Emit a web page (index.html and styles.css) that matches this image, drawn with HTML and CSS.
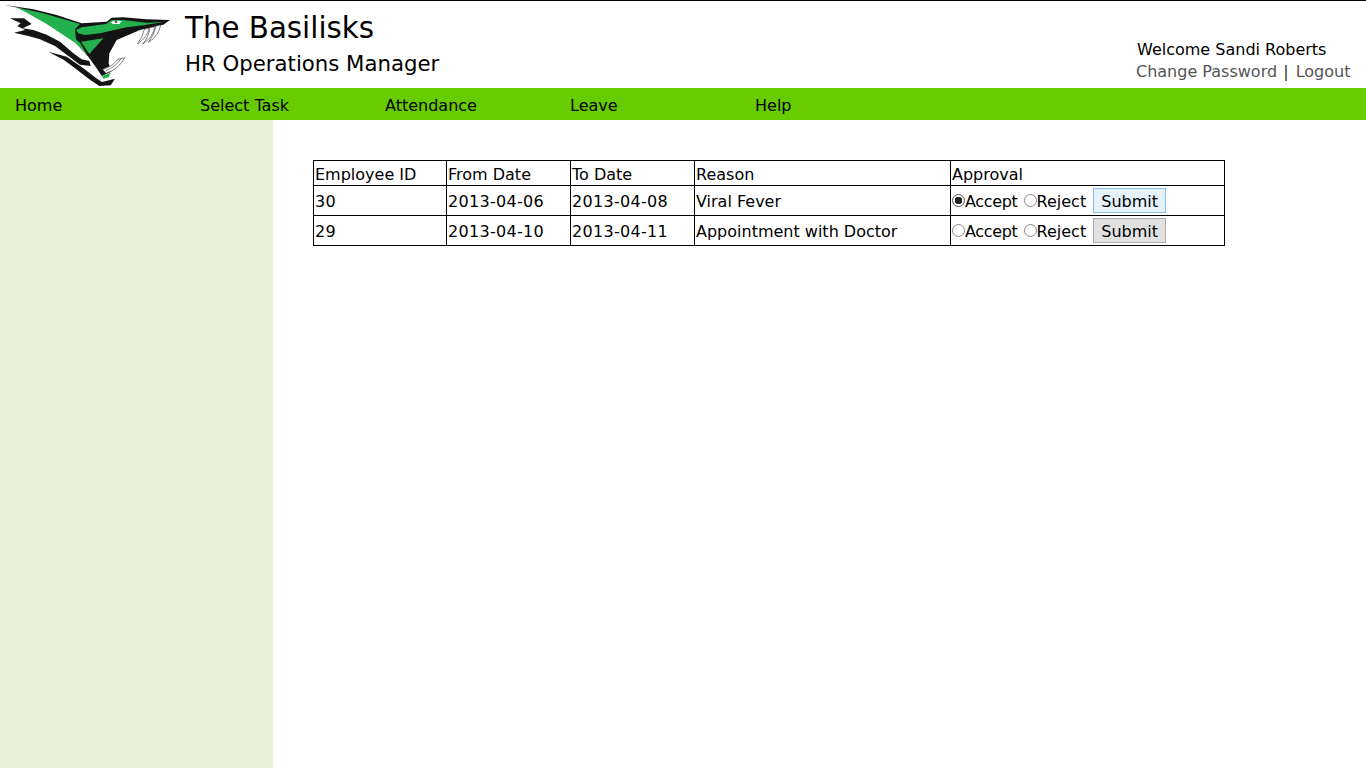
FILE: index.html
```html
<!DOCTYPE html>
<html lang="en">
<head>
<meta charset="utf-8">
<title>The Basilisks - HR Operations Manager</title>
<link rel="stylesheet" href="styles.css">
</head>
<body>
<header class="header">
  <svg class="logo" width="180" height="87" viewBox="0 3 540 261" aria-label="Basilisk logo">
    <path fill="#141414" d="M15 15 L100 28 L170 45 L245 70 L320 65 L335 53 L370 52 L440 58 L510 60 L490 74 L420 90 L350 120 L328 160 L326 190 L334 215 L305 228 L290 205 L265 170 L225 125 L140 70 L60 25 Z"/>
    <path fill="#22b14c" d="M48 22 L130 40 L240 72 L225 88 L228 118 L240 128 L262 165 L225 128 L140 72 L75 35 Z"/>
    <path fill="#22b14c" d="M245 82 L318 72 L335 60 L368 60 L440 68 L495 65 L430 76 L380 82 L300 100 L255 105 L235 100 L228 90 Z"/>
    <path fill="#22b14c" d="M243 125 L310 115 L268 162 Z"/>
    <path fill="#fff" d="M332 67 Q345 58 365 64 L358 72 L338 72 Z"/>
    <circle cx="348" cy="65" r="4" fill="#555"/>
    <path fill="#141414" d="M30 55 L72 55 L95 72 L68 85 L100 90 L140 104 L180 125 L220 160 L245 178 L268 183 L272 198 L240 194 L205 168 L165 138 L120 118 L85 108 L42 98 L75 90 L52 78 L62 70 Z"/>
    <path fill="#141414" d="M145 155 L200 170 L248 203 L288 234 L306 246 L345 236 L332 256 L298 258 L268 238 L232 210 L192 180 Z"/>
    <path fill="#22b14c" d="M306 228 L332 218 L326 232 L310 236 Z"/>
    <g class="fang">
      <path d="M447 85 Q442 112 412 132 Q428 112 433 88 Z"/>
      <path d="M464 80 Q460 112 428 132 Q446 112 450 83 Z"/>
      <path d="M482 75 Q477 107 445 127 Q463 105 468 78 Z"/>
      <path d="M374 173 Q357 207 318 220 L308 208 Q340 198 353 178 Z"/>
      <path d="M363 176 Q350 198 316 213"/>
    </g>
  </svg>
  <div class="titles">
    <h1 class="title">The Basilisks</h1>
    <h2 class="subtitle">HR Operations Manager</h2>
  </div>
  <div class="account">
    <div class="welcome">Welcome Sandi Roberts</div>
    <div class="links"><a class="change" href="#">Change Password</a> | <a class="logout" href="#">Logout</a></div>
  </div>
</header>
<nav class="nav">
  <a href="#">Home</a>
  <a href="#">Select Task</a>
  <a href="#">Attendance</a>
  <a href="#">Leave</a>
  <a href="#">Help</a>
</nav>
<div class="page">
  <aside class="sidebar"></aside>
  <main class="content">
    <table class="grid">
      <colgroup>
        <col class="c-id"><col class="c-date"><col class="c-date"><col class="c-reason"><col class="c-approval">
      </colgroup>
      <tr class="head">
        <td>Employee ID</td><td>From Date</td><td>To Date</td><td>Reason</td><td>Approval</td>
      </tr>
      <tr>
        <td class="num">30</td><td class="num">2013-04-06</td><td class="num">2013-04-08</td><td>Viral Fever</td>
        <td class="approval-cell"><div class="approval"><label class="opt opt-accept"><input type="radio" name="a1" checked><span>Accept</span></label><label class="opt"><input type="radio" name="a1"><span>Reject</span></label><button class="btn btn-active">Submit</button></div></td>
      </tr>
      <tr>
        <td class="num">29</td><td class="num">2013-04-10</td><td class="num">2013-04-11</td><td>Appointment with Doctor</td>
        <td class="approval-cell"><div class="approval"><label class="opt opt-accept"><input type="radio" name="a2"><span>Accept</span></label><label class="opt"><input type="radio" name="a2"><span>Reject</span></label><button class="btn">Submit</button></div></td>
      </tr>
    </table>
  </main>
</div>
</body>
</html>
```
FILE: styles.css
```css
* { box-sizing: border-box; }
html, body { height: 100%; }
body {
  margin: 0;
  display: flex;
  flex-direction: column;
  height: 768px;
  overflow: hidden;
  background: #fff;
  color: #000;
  font-family: "DejaVu Sans", Verdana, sans-serif;
  font-size: 16px;
}
.header {
  height: 88px;
  flex: none;
  display: flex;
  border-top: 1px solid #000;
}
.logo { flex: none; margin-right: 5px; }
.fang path { fill: #fff; stroke: #444; stroke-width: 2; }
.titles { flex: 1; padding-top: 10px; }
.title { margin: 0; font-size: 29.3px; font-weight: 400; line-height: 34px; }
.subtitle { margin: 6px 0 0; font-size: 21.25px; font-weight: 400; line-height: 26px; }
.account { width: 230px; flex: none; padding-top: 38px; line-height: 22px; }
.welcome { padding-left: 1px; }
.links { color: #333; }
.links a { color: #555; text-decoration: none; }
.links .change { margin-right: 1px; }
.links .logout { margin-left: 2px; }
.nav {
  height: 32px;
  flex: none;
  display: flex;
  align-items: center;
  padding: 2px 0 0 15px;
  background: #66cc00;
}
.nav a { width: 185px; color: #000; text-decoration: none; }
.page { flex: 1; display: flex; min-height: 0; }
.sidebar { width: 273px; flex: none; background: #e8f1d7; }
.content { flex: 1; padding: 40px 0 0 40px; }
.grid {
  width: 911px;
  table-layout: fixed;
  border-collapse: collapse;
}
.c-id { width: 133px; }
.c-date { width: 124px; }
.c-reason { width: 256px; }
.c-approval { width: 274px; }
.grid td { border: 1px solid #000; padding: 2px 1px 0; height: 30px; white-space: nowrap; }
.grid .head td { height: 25px; }
.grid .num { letter-spacing: .3px; }
.grid .approval-cell { padding: 0 1px; }
.approval { display: flex; align-items: center; height: 29px; }
.opt { display: flex; align-items: center; margin-right: 6px; padding-top: 1px; }
.opt-accept span { letter-spacing: -.33px; }
.opt input {
  appearance: none;
  width: 13px;
  height: 13px;
  margin: 0 0 1px;
  border: 1px solid #8a8a8a;
  border-radius: 50%;
  background: #fff;
}
.opt input:checked {
  border-color: #555;
  background: radial-gradient(circle, #222 0 3.5px, #fff 4px);
}
.btn {
  width: 73px;
  height: 25px;
  margin-left: 1px;
  padding: 1px 0 0;
  border: 1px solid #adadad;
  background: #e1e1e1;
  color: #000;
  font: inherit;
}
.btn-active { background: #e5f1fb; border-color: #8cc0ec; }
```
